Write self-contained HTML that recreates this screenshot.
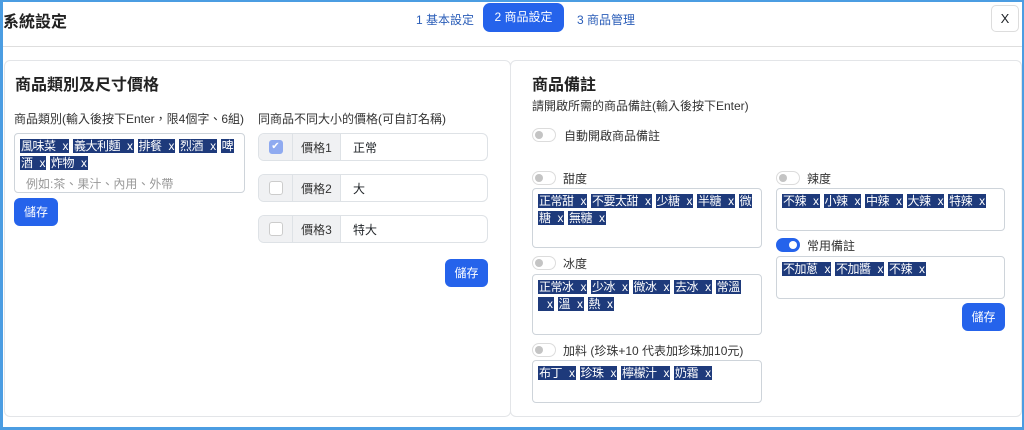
<!DOCTYPE html>
<html><head><meta charset="utf-8"><style>
*{box-sizing:border-box;margin:0;padding:0}
body{width:1024px;height:430px;overflow:hidden;background:#fff;font-family:"Liberation Sans","Noto Sans CJK TC",sans-serif;color:#212529;position:relative}
.a{position:absolute}
.frame{left:0;top:0;width:1024px;height:430px;border:3px solid #4b9de2;border-top-width:2px;border-right-width:2px;pointer-events:none;z-index:10}
.card{border:1px solid #e3e5e8;border-radius:6px;background:#fff}
.h{font-size:16px;font-weight:bold;color:#222}
.t{font-size:12px;color:#333;white-space:nowrap}
.box{border:1px solid #ced4da;border-radius:4px;background:#fff;padding:4px 4px 0 5px;font-size:12px;line-height:17px;white-space:nowrap;overflow:hidden}
.tg{background:#1e3a7b;color:#fff;padding:0 1px;margin-right:4px;letter-spacing:-0.5px}
.tg i{font-style:normal;margin-left:7px}
.btn{background:#2563eb;color:#fff;border-radius:6px;font-size:12px;text-align:center}
.row{border:1px solid #dee2e6;border-radius:6px;height:28px;display:flex;overflow:hidden;font-size:12px}
.row .c{width:34px;background:#f0f1f3;border-right:1px solid #dee2e6;display:flex;align-items:center;justify-content:center}
.row .c span{width:14px;height:14px;border:1px solid #ccc;border-radius:3px;background:#fff}
.row .l{width:48px;background:#f0f1f3;border-right:1px solid #dee2e6;display:flex;align-items:center;justify-content:center;color:#333}
.row .v{flex:1;display:flex;align-items:center;padding-left:12px}
.sw{width:24px;height:14px;border:1px solid #dcdcdc;border-radius:7px;background:#fff}
.sw::after{content:"";position:absolute;left:2px;top:2px;width:8px;height:8px;border-radius:50%;background:#c4c4c4}
.sw.on{background:#2563eb;border-color:#2563eb}
.sw.on::after{left:12px;background:#fff}
</style></head><body>
<div class="a frame"></div>
<div class="a h" style="left:3px;top:8px">系統設定</div>
<div class="a t" style="left:416px;top:11px;color:#2a5db8">1 基本設定</div>
<div class="a btn" style="left:483px;top:3px;width:81px;height:29px;line-height:29px;border-radius:7px">2 商品設定</div>
<div class="a t" style="left:577px;top:11px;color:#2a5db8">3 商品管理</div>
<div class="a" style="left:991px;top:5px;width:28px;height:27px;border:1px solid #ddd;border-radius:5px;font-size:13px;text-align:center;line-height:25px">X</div>
<div class="a" style="left:3px;top:46px;width:1020px;height:1px;background:#dedede"></div>

<div class="a card" style="left:4px;top:60px;width:507px;height:357px"></div>
<div class="a card" style="left:510px;top:60px;width:512px;height:357px"></div>

<div class="a h" style="left:15px;top:71px">商品類別及尺寸價格</div>
<div class="a t" style="left:14px;top:110px">商品類別(輸入後按下Enter，限4個字、6組)</div>
<div class="a box" style="left:14px;top:133px;width:231px;height:60px"><span class="tg">風味菜<i>x</i></span><span class="tg">義大利麵<i>x</i></span><span class="tg">排餐<i>x</i></span><span class="tg">烈酒<i>x</i></span><span class="tg">啤</span><br><span class="tg">酒<i>x</i></span><span class="tg">炸物<i>x</i></span><br><span style="color:#999;margin-left:6px;line-height:24px">例如:茶、果汁、內用、外帶</span></div>
<div class="a btn" style="left:14px;top:198px;width:44px;height:28px;line-height:28px">儲存</div>

<div class="a t" style="left:258px;top:110px">同商品不同大小的價格(可自訂名稱)</div>
<div class="a row" style="left:258px;top:133px;width:230px"><div class="c"><span style="background:#8faaf0;border-color:#8faaf0;color:#fff;font-size:10px;line-height:12px;text-align:center">✔</span></div><div class="l">價格1</div><div class="v">正常</div></div>
<div class="a row" style="left:258px;top:174px;width:230px"><div class="c"><span></span></div><div class="l">價格2</div><div class="v">大</div></div>
<div class="a row" style="left:258px;top:215px;width:230px"><div class="c"><span></span></div><div class="l">價格3</div><div class="v">特大</div></div>
<div class="a btn" style="left:445px;top:259px;width:43px;height:28px;line-height:28px">儲存</div>

<div class="a h" style="left:532px;top:71px">商品備註</div>
<div class="a t" style="left:532px;top:97px">請開啟所需的商品備註(輸入後按下Enter)</div>
<div class="a sw" style="left:532px;top:128px"></div><div class="a t" style="left:564px;top:127px">自動開啟商品備註</div>

<div class="a sw" style="left:532px;top:171px"></div><div class="a t" style="left:563px;top:170px">甜度</div>
<div class="a box" style="left:532px;top:188px;width:230px;height:60px"><span class="tg">正常甜<i>x</i></span><span class="tg">不要太甜<i>x</i></span><span class="tg">少糖<i>x</i></span><span class="tg">半糖<i>x</i></span><span class="tg">微</span><br><span class="tg">糖<i>x</i></span><span class="tg">無糖<i>x</i></span></div>

<div class="a sw" style="left:776px;top:171px"></div><div class="a t" style="left:807px;top:170px">辣度</div>
<div class="a box" style="left:776px;top:188px;width:229px;height:43px"><span class="tg">不辣<i>x</i></span><span class="tg">小辣<i>x</i></span><span class="tg">中辣<i>x</i></span><span class="tg">大辣<i>x</i></span><span class="tg">特辣<i>x</i></span></div>

<div class="a sw" style="left:532px;top:256px"></div><div class="a t" style="left:563px;top:255px">冰度</div>
<div class="a box" style="left:532px;top:274px;width:230px;height:61px"><span class="tg">正常冰<i>x</i></span><span class="tg">少冰<i>x</i></span><span class="tg">微冰<i>x</i></span><span class="tg">去冰<i>x</i></span><span class="tg">常溫</span><br><span class="tg"><i style="margin-left:8px">x</i></span><span class="tg">溫<i>x</i></span><span class="tg">熱<i>x</i></span></div>

<div class="a sw on" style="left:776px;top:238px"></div><div class="a t" style="left:807px;top:237px">常用備註</div>
<div class="a box" style="left:776px;top:256px;width:229px;height:43px"><span class="tg">不加蔥<i>x</i></span><span class="tg">不加醬<i>x</i></span><span class="tg">不辣<i>x</i></span></div>
<div class="a btn" style="left:962px;top:303px;width:43px;height:28px;line-height:28px">儲存</div>

<div class="a sw" style="left:532px;top:343px"></div><div class="a t" style="left:563px;top:342px">加料 (珍珠+10 代表加珍珠加10元)</div>
<div class="a box" style="left:532px;top:360px;width:230px;height:43px"><span class="tg">布丁<i>x</i></span><span class="tg">珍珠<i>x</i></span><span class="tg">檸檬汁<i>x</i></span><span class="tg">奶霜<i>x</i></span></div>
</body></html>
